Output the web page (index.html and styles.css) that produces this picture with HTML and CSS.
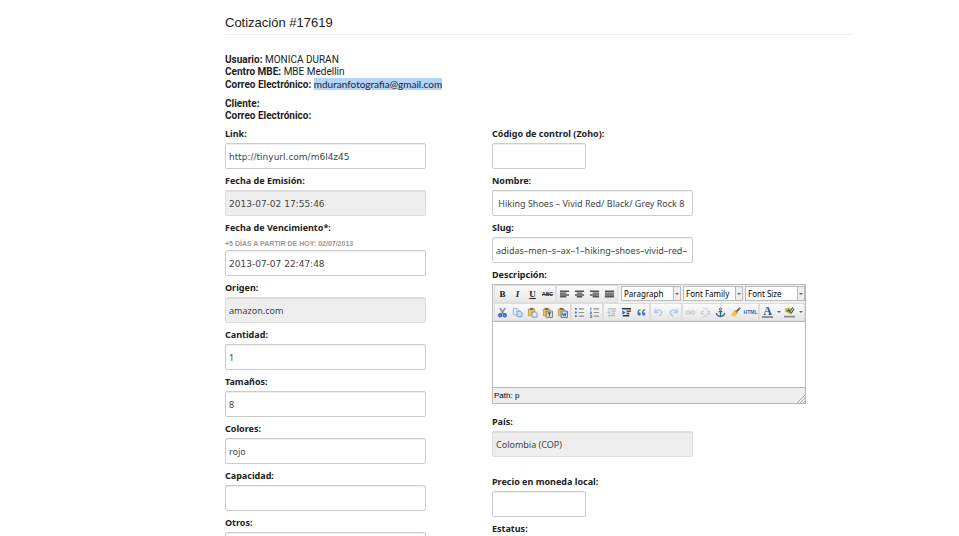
FILE: index.html
```html
<!DOCTYPE html>
<html lang="es">
<head>
<meta charset="utf-8">
<title>Cotización #17619</title>
<link rel="stylesheet" href="styles.css">
</head>
<body>
<main class="page">
  <h1 class="title">Cotización #17619</h1>
  <section class="info">
    <p><b>Usuario:</b> MONICA DURAN<br><b>Centro MBE:</b> MBE Medellin<br><b>Correo Electrónico:</b> <mark>mduranfotografia@gmail.com</mark></p>
    <p><b>Cliente:</b><br><b>Correo Electrónico:</b></p>
  </section>
  <form class="columns">
    <div class="column">
      <div class="field"><label for="link">Link:</label><input id="link" class="data" type="text" value="http://tinyurl.com/m6l4z45"></div>
      <div class="field"><label for="emision">Fecha de Emisión:</label><input id="emision" class="data" type="text" value="2013-07-02 17:55:46" disabled></div>
      <div class="field"><label for="venc">Fecha de Vencimiento*:</label><small class="hint">+5 DÍAS A PARTIR DE HOY: 02/07/2013</small><input id="venc" class="data" type="text" value="2013-07-07 22:47:48"></div>
      <div class="field"><label for="origen">Origen:</label><input id="origen" type="text" value="amazon.com" disabled></div>
      <div class="field"><label for="cantidad">Cantidad:</label><input id="cantidad" type="text" value="1"></div>
      <div class="field"><label for="tam">Tamaños:</label><input id="tam" type="text" value="8"></div>
      <div class="field"><label for="colores">Colores:</label><input id="colores" type="text" value="rojo"></div>
      <div class="field"><label for="capacidad">Capacidad:</label><input id="capacidad" type="text"></div>
      <div class="field"><label for="otros">Otros:</label><input id="otros" type="text"></div>
    </div>
    <div class="column">
      <div class="field"><label for="zoho">Código de control (Zoho):</label><input id="zoho" class="short" type="text"></div>
      <div class="field"><label for="nombre">Nombre:</label><input id="nombre" type="text" value=" Hiking Shoes – Vivid Red/ Black/ Grey Rock 8"></div>
      <div class="field"><label for="slug">Slug:</label><input id="slug" type="text" value="adidas–men–s–ax–1–hiking–shoes–vivid–red–"></div>
      <div class="field editor-field">
        <label for="desc">Descripción:</label>
        <div class="editor">
          <div class="toolbar">
            <div class="group">
              <button type="button" class="glyph bold" aria-label="Bold">B</button>
              <button type="button" class="glyph italic" aria-label="Italic">I</button>
              <button type="button" class="glyph underline" aria-label="Underline">U</button>
              <button type="button" class="glyph strike" aria-label="Strikethrough">ABC</button>
            </div>
            <div class="group">
              <button type="button" aria-label="Align left"><svg viewBox="0 0 12 12"><path class="line" d="M1 2.5h10M1 4.5h7M1 6.5h10M1 8.5h7"/></svg></button>
              <button type="button" aria-label="Align center"><svg viewBox="0 0 12 12"><path class="line" d="M1 2.5h10M3 4.5h6M1 6.5h10M3 8.5h6"/></svg></button>
              <button type="button" aria-label="Align right"><svg viewBox="0 0 12 12"><path class="line" d="M1 2.5h10M4 4.5h7M1 6.5h10M4 8.5h7"/></svg></button>
              <button type="button" aria-label="Justify"><svg viewBox="0 0 12 12"><path class="line" d="M1 2.5h10M1 4.5h10M1 6.5h10M1 8.5h10"/></svg></button>
            </div>
            <div class="pick"><select aria-label="Format"><option>Paragraph</option></select></div>
            <div class="pick"><select aria-label="Font family"><option>Font Family</option></select></div>
            <div class="pick"><select aria-label="Font size"><option>Font Size</option></select></div>
          </div>
          <div class="toolbar">
            <div class="group">
              <button type="button" aria-label="Cut"><svg viewBox="0 0 12 12"><path d="M3 1l4.500 7M9 1L4.500 8" stroke="#8094b0" stroke-width="1.800" fill="none"/><circle cx="3.500" cy="9" r="1.500" stroke="#2f67c4" stroke-width="1.800" fill="none"/><circle cx="8.500" cy="9" r="1.500" stroke="#2f67c4" stroke-width="1.800" fill="none"/></svg></button>
              <button type="button" aria-label="Copy"><svg viewBox="0 0 12 12"><path d="M1.500 1.500h4l2 2v5h-6z" fill="#e4eefb" stroke="#8fb0df"/><path d="M5.500 4.500h3.500l2 2v4h-5.500z" fill="#cfe0f7" stroke="#6d97d6"/></svg></button>
              <button type="button" aria-label="Paste"><svg viewBox="0 0 12 12"><path d="M1.500 2.500h7v7h-7z" fill="#edc34b" stroke="#c99b35"/><path d="M3 1h4v2H3z" fill="#666"/><path d="M5.500 5.500h4l1.500 1.500v4h-5.500z" fill="#dfeafa" stroke="#7492bd"/></svg></button>
              <button type="button" aria-label="Paste as plain text"><svg viewBox="0 0 12 12"><path d="M1.500 2.500h7v7h-7z" fill="#edc34b" stroke="#c99b35"/><path d="M3 1h4v2H3z" fill="#666"/><path d="M4.500 4.500h7v7h-7z" fill="#dedede" stroke="#777"/><path d="M6 6.500h4M8 6v4.500" stroke="#333"/></svg></button>
              <button type="button" aria-label="Paste from Word"><svg viewBox="0 0 12 12"><path d="M1.500 2.500h7v7h-7z" fill="#edc34b" stroke="#c99b35"/><path d="M3 1h4v2H3z" fill="#666"/><path d="M4.500 4.500h7v7h-7z" fill="#dbe8fc" stroke="#3d6fc4"/><path d="M6 6l1 4 1-3 1 3 1-4" fill="none" stroke="#2456b3"/></svg></button>
            </div>
            <div class="group">
              <button type="button" aria-label="Bulleted list"><svg viewBox="0 0 12 12"><path d="M1 2h2M1 6h2M1 10h2" stroke="#3c6fc9" stroke-width="2"/><path d="M5 2h6M5 6h6M5 10h6" stroke="#8d9299" stroke-width="1.300"/></svg></button>
              <button type="button" aria-label="Numbered list"><svg viewBox="0 0 12 12"><path d="M2 .5v3M1 5.500h2l-2 2h2M1 9.500h2v2H1" fill="none" stroke="#3c6fc9"/><path d="M5 2h6M5 6h6M5 10h6" stroke="#8d9299" stroke-width="1.300"/></svg></button>
            </div>
            <div class="group">
              <button type="button" class="off" aria-label="Outdent"><svg viewBox="0 0 12 12"><path d="M2 2h9M6 4.500h5M6 7h4M2 9.500h8" stroke="#555" stroke-width="1.300"/><path d="M4.500 3.500v5L1 6z" fill="#446fb5"/></svg></button>
              <button type="button" aria-label="Indent"><svg viewBox="0 0 12 12"><path d="M1 2h10M6 4.500h5M6 7h3M2 9.500h7" stroke="#333" stroke-width="1.600"/><path d="M1.500 3.500v5L5 6z" fill="#335fae"/></svg></button>
              <button type="button" aria-label="Blockquote"><svg viewBox="0 0 12 12"><path d="M5 3C3.500 3 2 4.500 2 7M10 3C8.500 3 7 4.500 7 7" fill="none" stroke="#3c6cc0" stroke-width="1.300"/><circle cx="3.500" cy="7.500" r="1.700" fill="#3c6cc0"/><circle cx="8.500" cy="7.500" r="1.700" fill="#3c6cc0"/></svg></button>
            </div>
            <div class="group">
              <button type="button" class="off" aria-label="Undo"><svg viewBox="0 0 12 12"><path d="M2 2v4h4M2.500 5.500C5 2 10 3 9.500 6.500 9.300 8 8 9 6.500 10" fill="none" stroke="#4c80d4" stroke-width="1.500"/></svg></button>
              <button type="button" class="off" aria-label="Redo"><svg viewBox="0 0 12 12"><path d="M10 2v4H6M9.500 5.500C7 2 2 3 2.500 6.500 2.700 8 4 9 5.500 10" fill="none" stroke="#4c80d4" stroke-width="1.500"/></svg></button>
            </div>
            <div class="group">
              <button type="button" class="off" aria-label="Link"><svg viewBox="0 0 12 12"><path d="M5.500 5V4.500H1.500v3h4V7M6.500 5V4.500h4v3h-4V7M4 6h4" fill="none" stroke="#58709a"/></svg></button>
              <button type="button" class="off" aria-label="Unlink"><svg viewBox="0 0 12 12"><path d="M4.500 4.500h-3v3h3M7.500 4.500h3v3h-3M4 1l1 2M8 1L7 3M4 11l1-2M8 11L7 9" fill="none" stroke="#58709a"/></svg></button>
              <button type="button" aria-label="Anchor"><svg viewBox="0 0 12 12"><circle cx="6" cy="2.200" r="1.200" fill="none" stroke="#3d5f93"/><path d="M6 3.500V10M4 5h4M1.500 6.500C2 9.500 4 10.300 6 10.300S10 9.500 10.500 6.500" fill="none" stroke="#3d5f93" stroke-width="1.500"/></svg></button>
              <button type="button" aria-label="Clean up"><svg viewBox="0 0 12 12"><path d="M11 1L7 5" stroke="#55607a" stroke-width="2"/><path d="M5 3l3.500 3.500L5 11 1 8.500z" fill="#edc646"/><path d="M5 3.500l3.500 3.500" stroke="#a97e2a"/></svg></button>
              <button type="button" class="glyph html" aria-label="HTML source">HTML</button>
            </div>
            <div class="group">
              <button type="button" class="glyph color" aria-label="Text color"><span>A</span></button>
              <button type="button" class="drop" aria-label="Text color options"></button>
              <button type="button" aria-label="Highlight color"><svg viewBox="0 0 12 12"><path d="M1 1h6l1 4-3 2-4-2z" fill="#c7c448"/><path d="M3 5l2-2 1 2 4-4.500M6 6.500h2L11 2" fill="none" stroke="#5a6236" stroke-width="1.300"/><path d="M0 10.500h12" stroke="#8b8f94" stroke-width="2"/></svg></button>
              <button type="button" class="drop" aria-label="Highlight color options"></button>
            </div>
          </div>
          <textarea id="desc"></textarea>
          <div class="status"><span>Path: p</span><svg class="grip" viewBox="0 0 8 8"><path d="M0 8L8 0M3 8l5-5M6 8l2-2" stroke="#aaa" fill="none"/></svg></div>
        </div>
      </div>
      <div class="field country"><label for="pais">País:</label><input id="pais" type="text" value="Colombia (COP)" disabled></div>
      <div class="field"><label for="precio">Precio en moneda local:</label><input id="precio" class="short" type="text"></div>
      <div class="field"><label for="estatus">Estatus:</label><input id="estatus" type="text"></div>
    </div>
  </form>
</main>
</body>
</html>
```
FILE: styles.css
```css
* { box-sizing: border-box; }
body {
  margin: 0;
  background: #fff;
  color: #222;
  font: 10px/12px "Liberation Sans", Arial, sans-serif;
}
.page { padding: 13px 107px 0 225px; }
.title {
  margin: 0 0 19px;
  padding-bottom: 1px;
  border-bottom: 1px solid #eee;
  font-size: 13px;
  line-height: 20px;
  font-weight: normal;
}
.info { font-family: Roboto, "Liberation Sans", sans-serif; }
.info p { margin: 0 0 7px; }
.info p + p { margin-bottom: 3px; }
.info mark { background: #b3d5fd; color: inherit; font-family: Lato, sans-serif; }
.columns {
  display: grid;
  grid-template-columns: 201px 1fr;
  column-gap: 66px;
}
.field { display: flex; flex-direction: column; align-items: flex-start; margin-bottom: 3px; }
.field label {
  font: bold 9px/18px "Noto Sans", "Open Sans", sans-serif;
}
.hint { font-size: 7px; line-height: 13px; font-weight: bold; color: #999; }
.field input {
  width: 201px;
  height: 26px;
  padding: 1px 3px 0;
  border: 1px solid #ccc;
  border-radius: 2px;
  background: #fff;
  box-shadow: inset 0 1px 1px #eee;
  color: #444;
  font: 9px/18px "Noto Sans", "Open Sans", sans-serif;
}
.field input.data { font-family: "DejaVu Sans", sans-serif; }
.field input:disabled { background: #eee; border-color: #ddd; box-shadow: inset 0 1px 1px #ddd; }
.field input.short { width: 94px; }

.editor-field { margin-bottom: 9px; }
.editor { width: 314px; border: 1px solid #bbb; background: #f0f0ee; }
.toolbar { display: flex; gap: 2px; height: 18px; padding: 1px 0 1px 2px; }
.group { display: flex; background: linear-gradient(#fafafa, #e6e6e6); box-shadow: 0 0 0 1px #ddd; }
.group button {
  display: flex;
  align-items: center;
  justify-content: center;
  width: 15px;
  height: 16px;
  padding: 0;
  border: 0;
  background: none;
}
.group svg { width: 11px; height: 11px; }
.group .off { opacity: .35; }
.line { stroke: #555; stroke-width: 1.500; }
.glyph { font: bold 9px/12px "Liberation Serif", serif; color: #222; }
.group .italic { font-style: italic; }
.group .underline { text-decoration: underline; }
.group .strike {
  background: linear-gradient(#555, #555) center / 11px 1px no-repeat;
  font: bold 5px/12px "Liberation Sans", sans-serif;
}
.group .html { font: bold 5px/12px "Liberation Sans", sans-serif; color: #3567b5; }
.group .color { font-size: 12px; line-height: 10px; color: #31588f; }
.color span { width: 11px; height: 12px; border-bottom: 2px solid #8b8f94; }
.group .drop { width: 7px; }
.drop::after, .pick::after {
  content: "";
  border: 2px solid transparent;
  border-top-color: #666;
  border-bottom: 0;
}
.pick { position: relative; display: flex; width: 60px; height: 15px; margin-left: 2px; }
.pick + .pick { margin-left: 0; }
.pick select {
  appearance: none;
  width: 100%;
  padding: 0 0 0 2px;
  border: 1px solid #bbb;
  border-radius: 0;
  background: linear-gradient(to right, #fff 51px, #bbb 51px, #bbb 52px, #eee 52px);
  color: #000;
  font: 8px/12px "Noto Sans", sans-serif;
}
.pick::after { position: absolute; right: 2px; top: 7px; pointer-events: none; }
.editor textarea {
  display: block;
  width: 100%;
  height: 67px;
  border: solid #bbb;
  border-width: 1px 0;
  resize: none;
  background: #fff;
}
.status {
  display: flex;
  justify-content: space-between;
  align-items: center;
  height: 15px;
  padding-left: 1px;
  background: #eee;
  color: #000;
  font-size: 8px;
}
.grip { width: 8px; height: 8px; align-self: flex-end; }
.country { margin-bottom: 16px; }
```
